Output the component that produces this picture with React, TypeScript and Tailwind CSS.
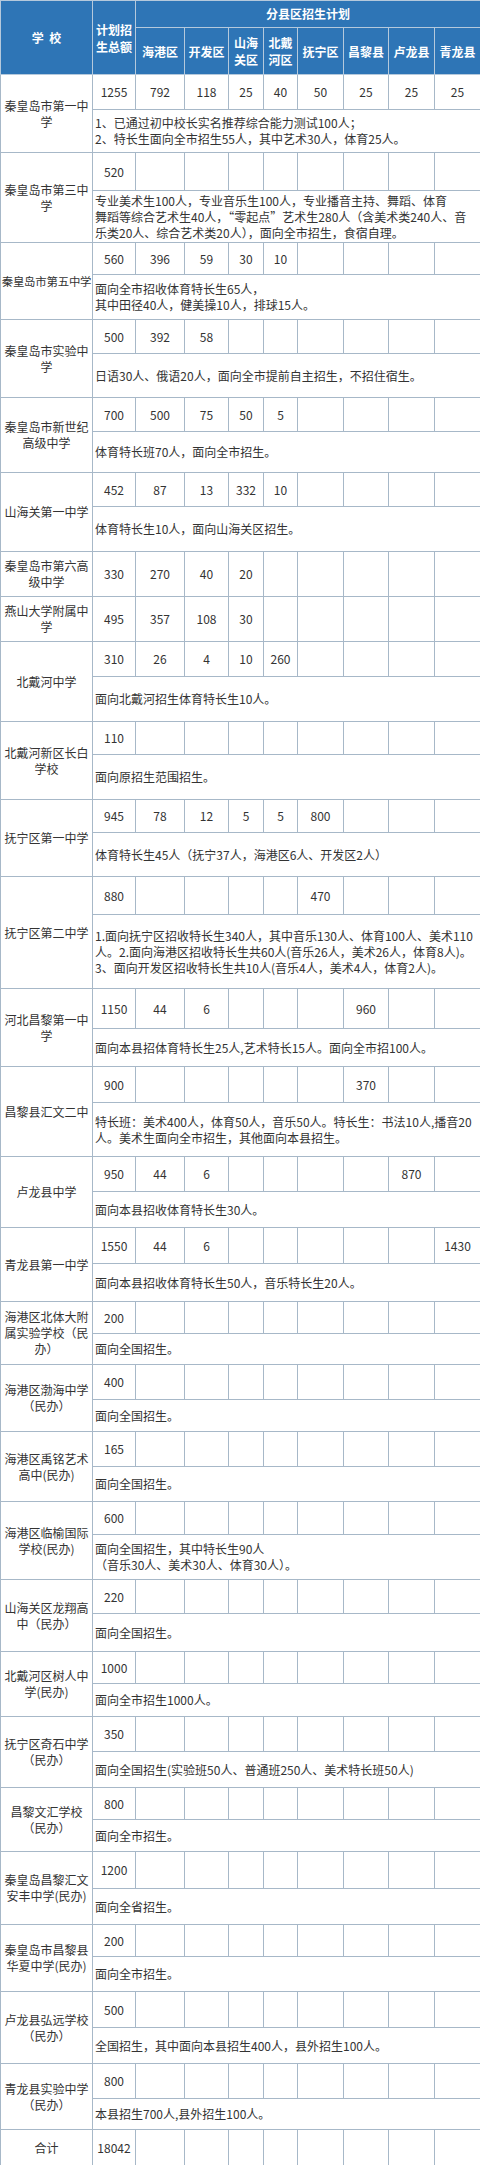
const DISTRICTS = ["海港区", "开发区", "山海关区", "北戴河区", "抚宁区", "昌黎县", "卢龙县", "青龙县"];

type School = {
  name: string[];
  total: string;
  d?: string[];
  note?: string[];
  rh: string;
  nh?: string;
  tight?: boolean;
};

const SCHOOLS: School[] = [
  {
    name: ["秦皇岛市第一中", "学"],
    total: "1255",
    d: ["792", "118", "25", "40", "50", "25", "25", "25"],
    note: ["1、已通过初中校长实名推荐综合能力测试100人；", "2、特长生面向全市招生55人，其中艺术30人，体育25人。"],
    rh: "h-[35px]",
    nh: "h-[43px]",
  },
  {
    name: ["秦皇岛市第三中", "学"],
    total: "520",
    note: [
      "专业美术生100人，专业音乐生100人，专业播音主持、舞蹈、体育",
      "舞蹈等综合艺术生40人，“零起点”艺术生280人（含美术类240人、音",
      "乐类20人、综合艺术类20人），面向全市招生，食宿自理。",
    ],
    rh: "h-[38px]",
    nh: "h-[52px]",
  },
  {
    name: ["秦皇岛市第五中学"],
    total: "560",
    d: ["396", "59", "30", "10"],
    note: ["面向全市招收体育特长生65人，", "其中田径40人，健美操10人，排球15人。"],
    rh: "h-[32px]",
    nh: "h-[45px]",
    tight: true,
  },
  {
    name: ["秦皇岛市实验中", "学"],
    total: "500",
    d: ["392", "58"],
    note: ["日语30人、俄语20人，面向全市提前自主招生，不招住宿生。"],
    rh: "h-[34px]",
    nh: "h-[44px]",
  },
  {
    name: ["秦皇岛市新世纪", "高级中学"],
    total: "700",
    d: ["500", "75", "50", "5"],
    note: ["体育特长班70人，面向全市招生。"],
    rh: "h-[34px]",
    nh: "h-[41px]",
  },
  {
    name: ["山海关第一中学"],
    total: "452",
    d: ["87", "13", "332", "10"],
    note: ["体育特长生10人，面向山海关区招生。"],
    rh: "h-[34px]",
    nh: "h-[45px]",
  },
  {
    name: ["秦皇岛市第六高", "级中学"],
    total: "330",
    d: ["270", "40", "20"],
    rh: "h-[45px]",
  },
  {
    name: ["燕山大学附属中", "学"],
    total: "495",
    d: ["357", "108", "30"],
    rh: "h-[45px]",
  },
  {
    name: ["北戴河中学"],
    total: "310",
    d: ["26", "4", "10", "260"],
    note: ["面向北戴河招生体育特长生10人。"],
    rh: "h-[35px]",
    nh: "h-[45px]",
  },
  {
    name: ["北戴河新区长白", "学校"],
    total: "110",
    note: ["面向原招生范围招生。"],
    rh: "h-[33px]",
    nh: "h-[45px]",
  },
  {
    name: ["抚宁区第一中学"],
    total: "945",
    d: ["78", "12", "5", "5", "800"],
    note: ["体育特长生45人（抚宁37人，海港区6人、开发区2人）"],
    rh: "h-[33px]",
    nh: "h-[44px]",
  },
  {
    name: ["抚宁区第二中学"],
    total: "880",
    d: ["", "", "", "", "470"],
    note: [
      "1.面向抚宁区招收特长生340人，其中音乐130人、体育100人、美术110",
      "人。2.面向海港区招收特长生共60人(音乐26人，美术26人，体育8人)。",
      "3、面向开发区招收特长生共10人(音乐4人，美术4人，体育2人)。",
    ],
    rh: "h-[38px]",
    nh: "h-[74px]",
  },
  {
    name: ["河北昌黎第一中", "学"],
    total: "1150",
    d: ["44", "6", "", "", "", "960"],
    note: ["面向本县招体育特长生25人,艺术特长15人。面向全市招100人。"],
    rh: "h-[40px]",
    nh: "h-[38px]",
  },
  {
    name: ["昌黎县汇文二中"],
    total: "900",
    d: ["", "", "", "", "", "370"],
    note: ["特长班：美术400人，体育50人，音乐50人。特长生：书法10人,播音20", "人。美术生面向全市招生，其他面向本县招生。"],
    rh: "h-[36px]",
    nh: "h-[54px]",
  },
  {
    name: ["卢龙县中学"],
    total: "950",
    d: ["44", "6", "", "", "", "", "870"],
    note: ["面向本县招收体育特长生30人。"],
    rh: "h-[35px]",
    nh: "h-[36px]",
  },
  {
    name: ["青龙县第一中学"],
    total: "1550",
    d: ["44", "6", "", "", "", "", "", "1430"],
    note: ["面向本县招收体育特长生50人，音乐特长生20人。"],
    rh: "h-[36px]",
    nh: "h-[38px]",
  },
  {
    name: ["海港区北体大附", "属实验学校（民", "办）"],
    total: "200",
    note: ["面向全国招生。"],
    rh: "h-[32px]",
    nh: "h-[31px]",
  },
  {
    name: ["海港区渤海中学", "（民办）"],
    total: "400",
    note: ["面向全国招生。"],
    rh: "h-[35px]",
    nh: "h-[32px]",
  },
  {
    name: ["海港区禹铭艺术", "高中(民办)"],
    total: "165",
    note: ["面向全国招生。"],
    rh: "h-[35px]",
    nh: "h-[35px]",
  },
  {
    name: ["海港区临榆国际", "学校(民办)"],
    total: "600",
    note: ["面向全国招生，其中特长生90人", "（音乐30人、美术30人、体育30人）。"],
    rh: "h-[33px]",
    nh: "h-[45px]",
  },
  {
    name: ["山海关区龙翔高", "中（民办）"],
    total: "220",
    note: ["面向全国招生。"],
    rh: "h-[34px]",
    nh: "h-[38px]",
  },
  {
    name: ["北戴河区树人中", "学(民办)"],
    total: "1000",
    note: ["面向全市招生1000人。"],
    rh: "h-[32px]",
    nh: "h-[33px]",
  },
  {
    name: ["抚宁区奇石中学", "（民办）"],
    total: "350",
    note: ["面向全国招生(实验班50人、普通班250人、美术特长班50人)"],
    rh: "h-[35px]",
    nh: "h-[36px]",
  },
  {
    name: ["昌黎文汇学校", "（民办）"],
    total: "800",
    note: ["面向全市招生。"],
    rh: "h-[32px]",
    nh: "h-[32px]",
  },
  {
    name: ["秦皇岛昌黎汇文", "安丰中学(民办)"],
    total: "1200",
    note: ["面向全省招生。"],
    rh: "h-[37px]",
    nh: "h-[36px]",
  },
  {
    name: ["秦皇岛市昌黎县", "华夏中学(民办)"],
    total: "200",
    note: ["面向全市招生。"],
    rh: "h-[32px]",
    nh: "h-[35px]",
  },
  {
    name: ["卢龙县弘远学校", "（民办）"],
    total: "500",
    note: ["全国招生，其中面向本县招生400人，县外招生100人。"],
    rh: "h-[36px]",
    nh: "h-[36px]",
  },
  {
    name: ["青龙县实验中学", "（民办）"],
    total: "800",
    note: ["本县招生700人,县外招生100人。"],
    rh: "h-[35px]",
    nh: "h-[31px]",
  },
  {
    name: ["合计"],
    total: "18042",
    rh: "h-[36px]",
  },
];

const cell = "border border-[#a7b8c8] p-0 text-center align-middle";

function SchoolRows({ s }: { s: School }) {
  const vals = Array.from({ length: 8 }, (_, i) => s.d?.[i] ?? "");
  return (
    <>
      <tr className={s.rh}>
        <td
          rowSpan={s.note ? 2 : 1}
          className={`${cell} leading-[16px] ${s.tight ? "whitespace-nowrap text-[11.4px] tracking-[-0.2px]" : ""}`}
        >
          {s.name.map((line, i) => (
            <div key={i}>{line}</div>
          ))}
        </td>
        <td className={cell}>{s.total}</td>
        {vals.map((v, i) => (
          <td key={i} className={cell}>
            {v}
          </td>
        ))}
      </tr>
      {s.note && (
        <tr className={s.nh}>
          <td colSpan={9} className="border border-[#a7b8c8] py-0 pl-[2px] pr-0 text-left align-middle leading-[16px] whitespace-nowrap">
            {s.note.map((line, i) => (
              <div key={i}>{line}</div>
            ))}
          </td>
        </tr>
      )}
    </>
  );
}

export default function App() {
  return (
    <div className="w-[480px] bg-white font-['Noto_Sans_CJK_SC','Noto_Sans',sans-serif] text-[12px] text-[#333333]">
      <table className="w-[480px] table-fixed border-collapse">
        <colgroup>
          <col className="w-[92px]" />
          <col className="w-[43px]" />
          <col className="w-[49px]" />
          <col className="w-[44px]" />
          <col className="w-[35px]" />
          <col className="w-[34px]" />
          <col className="w-[46px]" />
          <col className="w-[45px]" />
          <col className="w-[46px]" />
          <col className="w-[46px]" />
        </colgroup>
        <thead className="bg-[#2e75b6] font-bold text-white">
          <tr className="h-[27px]">
            <th rowSpan={2} className="border border-[#b5c9dc] p-0 text-center align-middle">
              学&nbsp;&nbsp;校
            </th>
            <th rowSpan={2} className="border border-[#b5c9dc] p-0 text-center align-middle leading-[17px]">
              <div>计划招</div>
              <div>生总额</div>
            </th>
            <th colSpan={8} className="border border-[#b5c9dc] p-0 text-center align-middle">
              分县区招生计划
            </th>
          </tr>
          <tr className="h-[47px]">
            {DISTRICTS.map((d) => (
              <th key={d} className="border border-[#b5c9dc] p-0 text-center align-middle leading-[17px]">
                {d.length === 4 ? (
                  <>
                    <div>{d.slice(0, 2)}</div>
                    <div>{d.slice(2)}</div>
                  </>
                ) : (
                  d
                )}
              </th>
            ))}
          </tr>
        </thead>
        <tbody>
          {SCHOOLS.map((s, i) => (
            <SchoolRows key={i} s={s} />
          ))}
        </tbody>
      </table>
    </div>
  );
}
